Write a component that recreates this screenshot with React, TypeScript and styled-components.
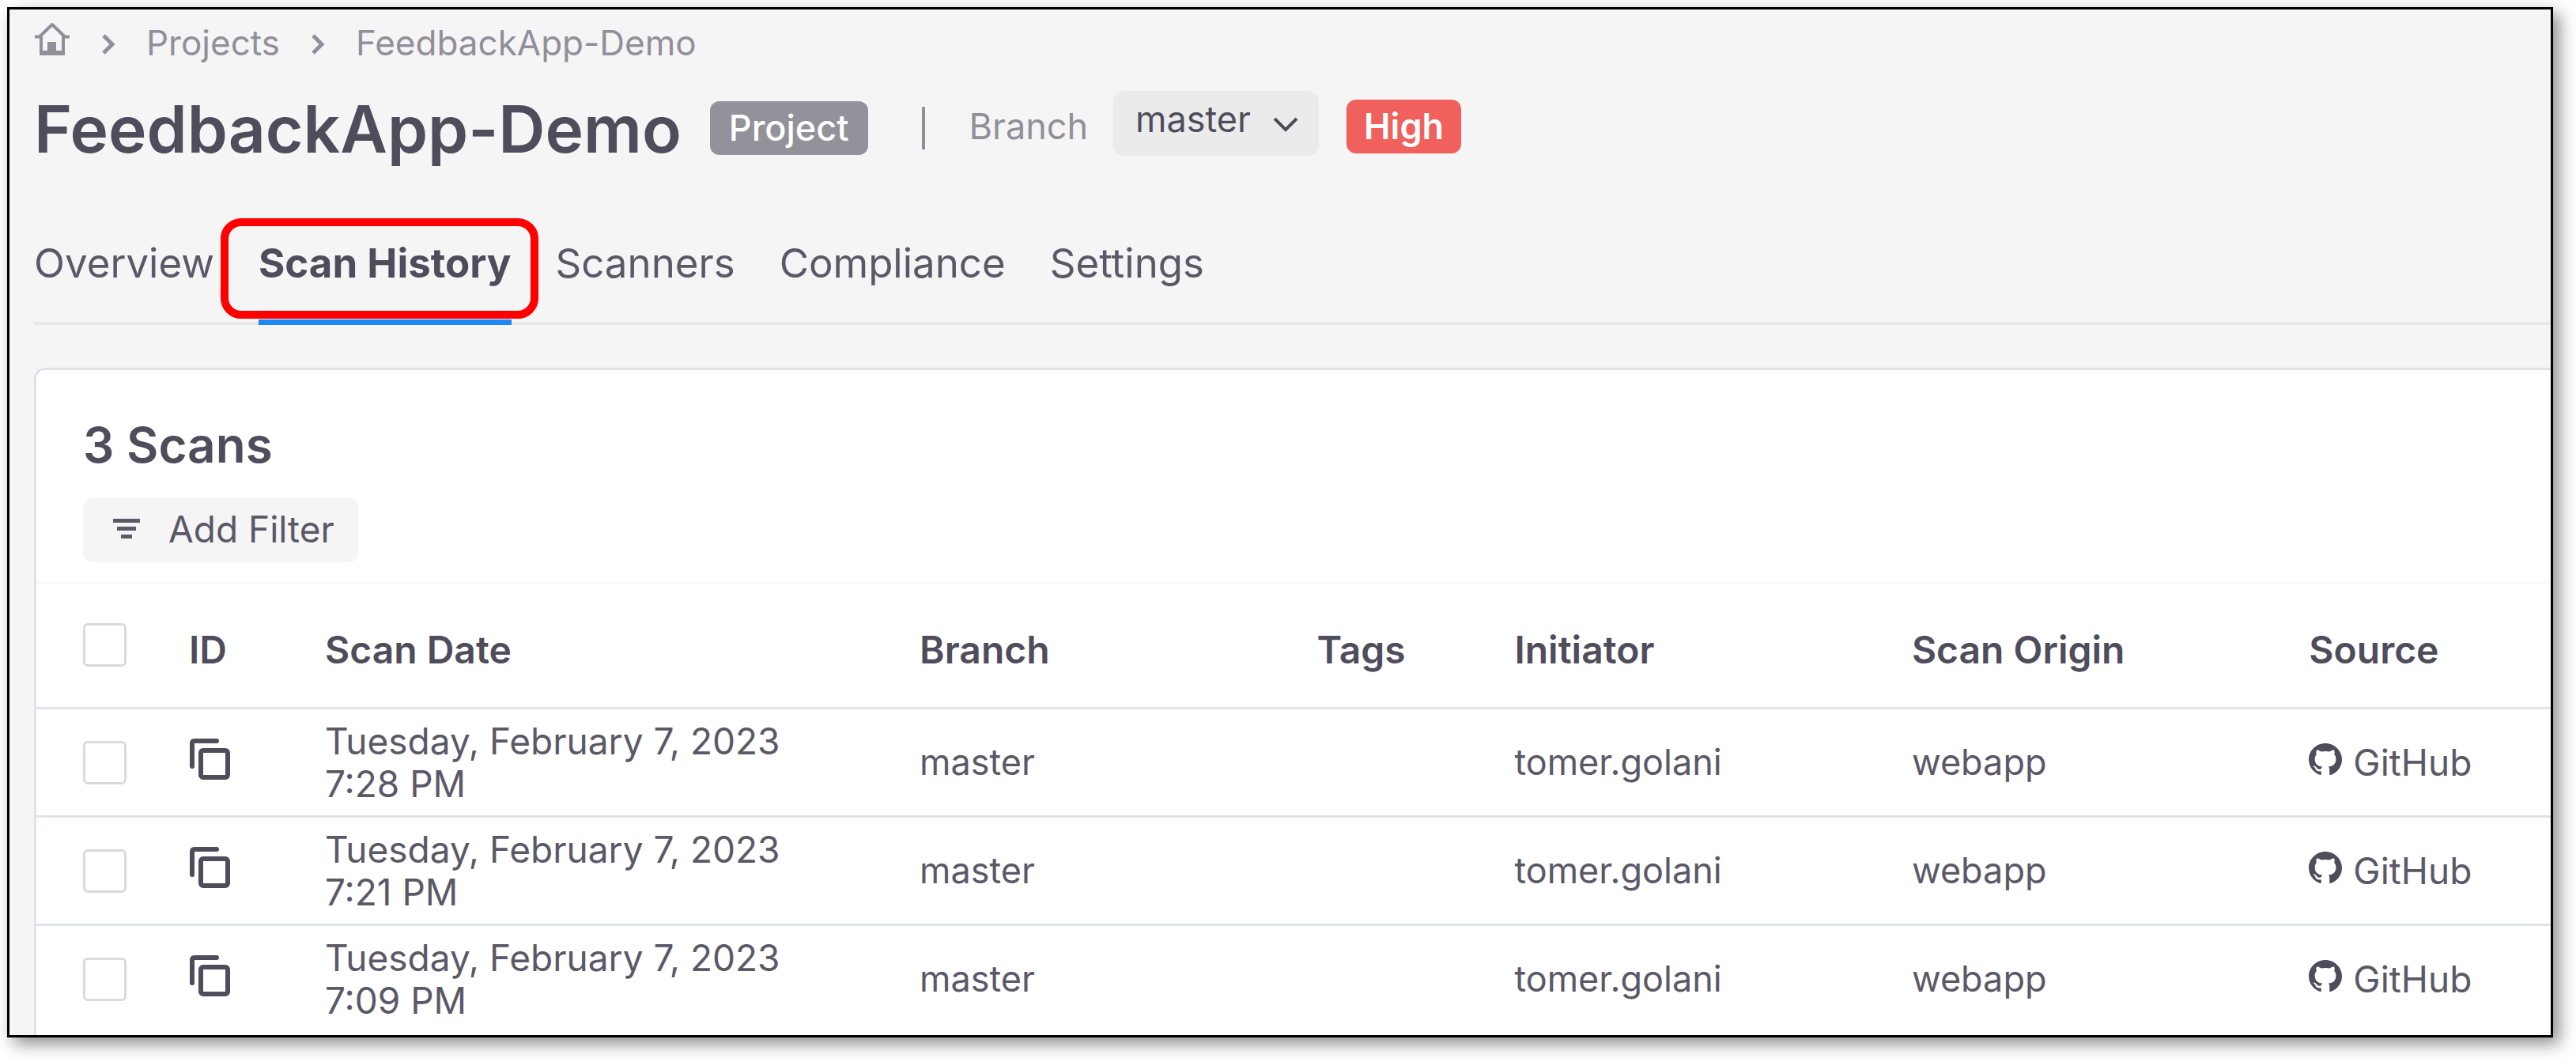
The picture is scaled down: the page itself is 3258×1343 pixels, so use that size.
import React from 'react';
import styled, { createGlobalStyle, css } from 'styled-components';

const ink = '#4f4d5b';
const softInk = '#5b5967';
const muted = '#918f99';
const line = '#dfe2e8';

const GlobalStyle = createGlobalStyle`
  *, *::before, *::after { box-sizing: border-box; }
  body {
    margin: 0;
    background: #fff;
    color: ${ink};
    font-family: Inter, "Liberation Sans", sans-serif;
    font-size: 45px;
    line-height: 56px;
  }
  button, select, input { font: inherit; color: inherit; margin: 0; }
`;

const Page = styled.div`
  padding: 9px 29px 29px 9px;
`;

const Frame = styled.main`
  border: 3px solid #000;
  background: #f5f5f5;
  box-shadow: 8px 8px 20px rgba(0, 0, 0, 0.45);
  padding: 14px 0 0 31px;
  overflow: hidden;
`;

const Breadcrumb = styled.nav`
  display: flex;
  align-items: center;
  gap: 39px;
  height: 56px;
  color: ${muted};
  font-size: 44px;
`;

const Crumb = styled.a`
  display: flex;
  color: inherit;
  text-decoration: none;

  svg { margin-bottom: 10px; }
`;

const TitleRow = styled.header`
  display: flex;
  align-items: center;
  height: 94px;
  margin-top: 33px;
`;

const Title = styled.h1`
  margin: 0;
  padding-top: 4px;
  font-size: 82px;
  line-height: 94px;
  font-weight: 600;
`;

const Badge = styled.span<{ $tone: 'neutral' | 'danger' }>`
  border-radius: 12px;
  color: #fff;
  ${({ $tone }) =>
    $tone === 'danger'
      ? css`
          padding: 6px 22px;
          background: #f0605d;
          font-weight: 600;
          margin-left: 35px;
        `
      : css`
          padding: 6px 24px;
          background: #93919a;
          font-weight: 500;
          margin-left: 36px;
        `}
`;

const Divider = styled.span`
  width: 4px;
  height: 54px;
  margin: 0 56px 0 68px;
  background: ${muted};
`;

const BranchGroup = styled.div`
  display: flex;
  align-items: center;
  align-self: flex-start;
  min-height: 90px;
`;

const BranchLabel = styled.label`
  color: ${muted};
  margin-right: 32px;
`;

const SelectWrap = styled.span`
  position: relative;
  display: flex;
  align-self: flex-start;

  svg {
    position: absolute;
    right: 26px;
    top: 32px;
    pointer-events: none;
  }
`;

const BranchSelect = styled.select`
  appearance: none;
  width: 260px;
  height: 82px;
  padding: 0 60px 10px 28px;
  border: 0;
  border-radius: 14px;
  background: #ebebeb;
`;

const Tabs = styled.nav`
  display: flex;
  gap: 56px;
  margin-top: 92px;
  box-shadow: inset 0 -4px 0 #e8e8e8;
`;

const Tab = styled.a<{ $active?: boolean }>`
  position: relative;
  padding-bottom: 39px;
  border-bottom: 7px solid ${({ $active }) => ($active ? '#1a88f5' : 'transparent')};
  color: ${({ $active }) => ($active ? ink : softInk)};
  font-size: 51px;
  line-height: 64px;
  font-weight: ${({ $active }) => ($active ? 700 : 400)};
  text-decoration: none;
`;

const Highlight = styled.span`
  position: absolute;
  inset: -25px -34px 1px -48px;
  border: 10px solid #f00;
  border-radius: 26px;
  pointer-events: none;
`;

const Card = styled.section`
  margin-top: 54px;
  padding-bottom: 1px;
  border: 3px solid ${line};
  border-width: 3px 0 0 3px;
  border-radius: 14px 0 0 0;
  background: #fff;
`;

const CardHead = styled.div`
  padding: 59px 59px 25px;
  border-bottom: 2px solid #f6f6f6;
`;

const CardTitle = styled.h2`
  margin: 0 0 31px;
  font-size: 62px;
  line-height: 72px;
  font-weight: 600;
`;

const FilterButton = styled.button`
  display: flex;
  align-items: center;
  gap: 36px;
  height: 81px;
  padding: 0 30px 4px 38px;
  border: 0;
  border-radius: 12px;
  background: #f5f5f5;
  color: ${softInk};
  font-size: 46px;
`;

const Table = styled.table`
  width: 100%;
  table-layout: fixed;
  border-spacing: 0;
`;

const Col = styled.col<{ $width?: string }>`
  width: ${({ $width }) => $width ?? 'auto'};
`;

const Head = styled.th<{ $check?: boolean }>`
  height: 159px;
  padding: ${({ $check }) => ($check ? '0 0 2px 59px' : '12px 0 0')};
  border-bottom: 3px solid ${line};
  text-align: left;
  font-size: 48px;
  font-weight: 600;
`;

const Cell = styled.td<{ $check?: boolean }>`
  height: 137px;
  padding: ${({ $check }) => ($check ? '0 0 0 59px' : '0')};
  border-bottom: 3px solid ${line};
  color: ${softInk};
  line-height: 54px;

  tr:last-child > & { border-bottom-color: transparent; }
`;

const DateText = styled.span`
  display: block;
  font-size: 46px;
`;

const Check = styled.input`
  appearance: none;
  display: block;
  width: 55px;
  height: 55px;
  border: 3px solid #dadada;
  border-radius: 6px;
  background: #fff;
`;

const IconButton = styled.button`
  display: block;
  padding: 0 0 8px;
  border: 0;
  background: none;
  line-height: 0;
`;

const Source = styled.span`
  display: flex;
  align-items: center;
  gap: 14px;
  font-size: 46px;

  svg { margin-bottom: 7px; color: ${ink}; }
`;

const HomeIcon = () => (
  <svg width="46" height="44" viewBox="0 0 46 44" fill="none" stroke="currentColor" strokeWidth="4">
    <path d="M1 19.500h6L23 4l16 15.500h6" strokeLinejoin="round" />
    <path d="M9 18v23h28V18" />
    <path d="M17 41V26h11v15zM9 37h28v4H9z" fill="currentColor" stroke="none" />
  </svg>
);

const CrumbArrow = () => (
  <svg width="18" height="32" viewBox="0 0 18 32" fill="none" stroke="currentColor" strokeWidth="5">
    <path d="M3 7l11 11L3 29" />
  </svg>
);

const ChevronDown = () => (
  <svg width="32" height="22" viewBox="0 0 32 22" fill="none" stroke={ink} strokeWidth="4">
    <path d="M2 3l14 14L30 3" />
  </svg>
);

const FilterIcon = () => (
  <svg width="34" height="26" viewBox="0 0 34 26" fill="currentColor">
    <path d="M0 0h34v5H0zM5 10h24v5H5zM10 20h14v5H10z" />
  </svg>
);

const CopyIcon = () => (
  <svg width="53" height="54" viewBox="0 0 53 54" fill="none" stroke={ink} strokeWidth="6" strokeLinecap="round">
    <path d="M4 36V7q0-3 3-3h28" />
    <rect x="15" y="16" width="34" height="34" rx="3" />
  </svg>
);

const GitHubIcon = () => (
  <svg width="42" height="41" viewBox="0 0 16 16" fill="currentColor" preserveAspectRatio="none">
    <path d="M8 0C3.580 0 0 3.580 0 8c0 3.540 2.290 6.530 5.470 7.590.4.070.55-.17.55-.38 0-.19-.01-.82-.01-1.490-2.010.37-2.530-.49-2.690-.94-.09-.23-.48-.94-.82-1.130-.28-.15-.68-.52-.01-.53.63-.01 1.080.58 1.230.82.72 1.210 1.870.87 2.330.66.07-.52.28-.87.51-1.070-1.780-.2-3.640-.89-3.640-3.950 0-.87.31-1.590.82-2.150-.08-.2-.36-1.020.08-2.120 0 0 .67-.21 2.200.82.64-.18 1.320-.27 2-.27s1.360.09 2 .27c1.530-1.040 2.200-.82 2.200-.82.44 1.100.16 1.920.08 2.120.51.56.82 1.270.82 2.150 0 3.070-1.870 3.750-3.650 3.950.29.25.54.73.54 1.480 0 1.070-.01 1.930-.01 2.200 0 .21.15.46.55.38A8.010 8.010 0 0 0 16 8c0-4.420-3.580-8-8-8z" />
  </svg>
);

const tabs = ['Overview', 'Scan History', 'Scanners', 'Compliance', 'Settings'];

const columns: { label: string; width?: string }[] = [
  { label: 'ID', width: '172px' },
  { label: 'Scan Date', width: '23.65%' },
  { label: 'Branch', width: '15.8%' },
  { label: 'Tags', width: '7.86%' },
  { label: 'Initiator', width: '15.8%' },
  { label: 'Scan Origin', width: '15.8%' },
  { label: 'Source' },
];

const scans = ['7:28 PM', '7:21 PM', '7:09 PM'].map((time) => ({
  day: 'Tuesday, February 7, 2023',
  time,
  branch: 'master',
  tags: '',
  initiator: 'tomer.golani',
  origin: 'webapp',
  source: 'GitHub',
}));

export default function App() {
  return (
    <Page>
      <GlobalStyle />
      <Frame>
        <Breadcrumb aria-label="Breadcrumb">
          <Crumb href="#home" aria-label="Home"><HomeIcon /></Crumb>
          <CrumbArrow />
          <Crumb href="#projects">Projects</Crumb>
          <CrumbArrow />
          <Crumb href="#project">FeedbackApp-Demo</Crumb>
        </Breadcrumb>

        <TitleRow>
          <Title>FeedbackApp-Demo</Title>
          <Badge $tone="neutral">Project</Badge>
          <Divider />
          <BranchGroup>
            <BranchLabel htmlFor="branch">Branch</BranchLabel>
            <SelectWrap>
              <BranchSelect id="branch" defaultValue="master">
                <option value="master">master</option>
              </BranchSelect>
              <ChevronDown />
            </SelectWrap>
            <Badge $tone="danger">High</Badge>
          </BranchGroup>
        </TitleRow>

        <Tabs aria-label="Project sections">
          {tabs.map((tab) => {
            const active = tab === 'Scan History';
            return (
              <Tab key={tab} href="#tab" $active={active} aria-current={active ? 'page' : undefined}>
                {tab}
                {active && <Highlight />}
              </Tab>
            );
          })}
        </Tabs>

        <Card>
          <CardHead>
            <CardTitle>3 Scans</CardTitle>
            <FilterButton type="button"><FilterIcon />Add Filter</FilterButton>
          </CardHead>
          <Table>
            <colgroup>
              <Col $width="193px" />
              {columns.map((c) => <Col key={c.label} $width={c.width} />)}
            </colgroup>
            <thead>
              <tr>
                <Head $check><Check type="checkbox" aria-label="Select all scans" /></Head>
                {columns.map((c) => <Head key={c.label} scope="col">{c.label}</Head>)}
              </tr>
            </thead>
            <tbody>
              {scans.map((scan) => (
                <tr key={scan.time}>
                  <Cell $check><Check type="checkbox" aria-label={`Select scan ${scan.time}`} /></Cell>
                  <Cell><IconButton type="button" aria-label="Copy scan ID"><CopyIcon /></IconButton></Cell>
                  <Cell><DateText>{scan.day}<br />{scan.time}</DateText></Cell>
                  <Cell>{scan.branch}</Cell>
                  <Cell>{scan.tags}</Cell>
                  <Cell>{scan.initiator}</Cell>
                  <Cell>{scan.origin}</Cell>
                  <Cell><Source><GitHubIcon />{scan.source}</Source></Cell>
                </tr>
              ))}
            </tbody>
          </Table>
        </Card>
      </Frame>
    </Page>
  );
}
